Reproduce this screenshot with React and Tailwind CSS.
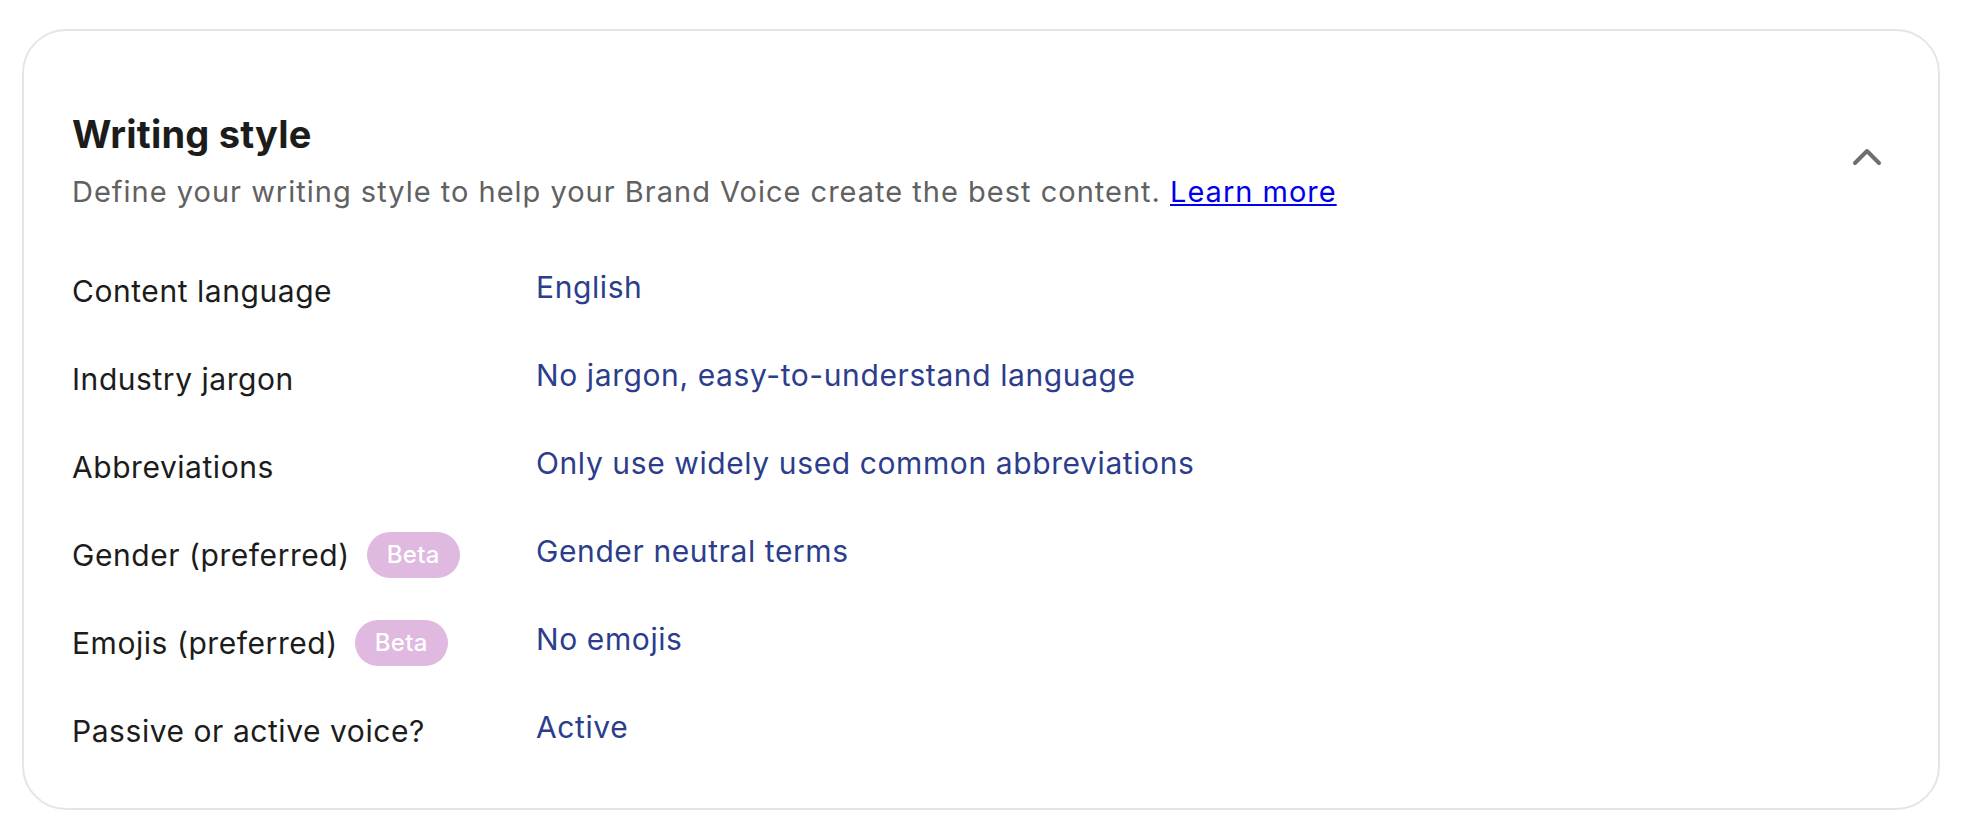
import { ChevronUp } from 'lucide-react'

const rows = [
  { label: 'Content language', value: 'English' },
  { label: 'Industry jargon', value: 'No jargon, easy-to-understand language' },
  { label: 'Abbreviations', value: 'Only use widely used common abbreviations' },
  { label: 'Gender (preferred)', value: 'Gender neutral terms', beta: true },
  { label: 'Emojis (preferred)', value: 'No emojis', beta: true },
  { label: 'Passive or active voice?', value: 'Active' },
]

function BetaBadge() {
  return (
    <span className="inline-flex items-center justify-center h-[46px] px-[20px] rounded-full bg-[#dfb9e0] text-white text-[24px] font-medium leading-none tracking-[0.3px]">
      Beta
    </span>
  )
}

function SettingRow({ label, value, beta }) {
  return (
    <div className="grid grid-cols-[464px_1fr] items-center h-[48px]">
      <div className="flex items-center gap-[17px] text-[30px] leading-[40px] tracking-[0.55px] text-[#1c1c1c]">
        <span>{label}</span>
        {beta && <BetaBadge />}
      </div>
      <div className="pb-[8px] text-[30px] leading-[40px] tracking-[0.6px] text-[#2c3d8c]">{value}</div>
    </div>
  )
}

export default function App() {
  return (
    <div className="min-h-screen bg-white pt-[29px] pl-[22px] pr-[24px] pb-[23px] font-['Inter',sans-serif]">
      <section className="border-2 border-[#e5e5e5] rounded-[44px] pl-[48px] pr-[47px] pt-[80px] pb-[53px]">
        {/* Header */}
        <div className="flex justify-between items-start">
          <div>
            <h2 className="text-[38px] leading-[46px] font-bold text-[#1c1c1c] tracking-[0.2px]">
              Writing style
            </h2>
            <p className="mt-[15px] text-[29px] leading-[40px] tracking-[1px] text-[#616161]">
              Define your writing style to help your Brand Voice create the best content.{' '}
              <a href="#" className="text-[#0000ee] underline">
                Learn more
              </a>
            </p>
          </div>
          <button className="mt-[22px] text-[#6e6e6e]">
            <ChevronUp size={48} strokeWidth={2} />
          </button>
        </div>

        {/* Settings */}
        <div className="mt-[55px] flex flex-col gap-[40px]">
          {rows.map((row) => (
            <SettingRow key={row.label} {...row} />
          ))}
        </div>
      </section>
    </div>
  )
}
